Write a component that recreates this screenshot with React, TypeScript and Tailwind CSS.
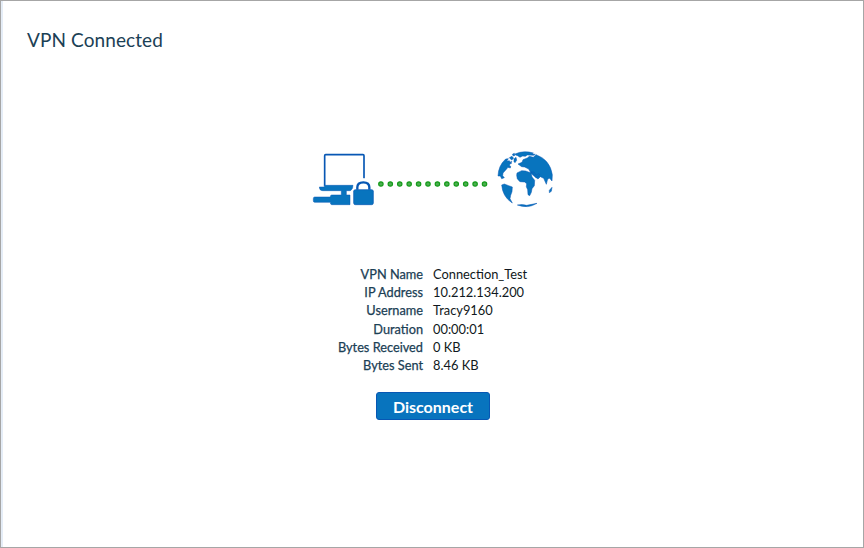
const details: { label: string; value: string }[] = [
  { label: 'VPN Name', value: 'Connection_Test' },
  { label: 'IP Address', value: '10.212.134.200' },
  { label: 'Username', value: 'Tracy9160' },
  { label: 'Duration', value: '00:00:01' },
  { label: 'Bytes Received', value: '0 KB' },
  { label: 'Bytes Sent', value: '8.46 KB' },
];

function ComputerIcon() {
  return (
    <svg className="h-[75px] w-[75px]" viewBox="0 0 225 225" fill="#0874be">
      <path d="M74 137V47q0-3 3-3h112q3 0 3 3v68" fill="none" stroke="#0757b4" strokeWidth="5" />
      <path d="M58 141h15v-5h86q-1 16-10 16h-10v13h11v29H95q-4 0-4-7H44q-4 0-4-5v-6q0-5 4-5h47q0-6 4-6h29v-13H68q-10 0-10-11z" stroke="#0757b4" strokeWidth="1.5" />
      <path d="M160 150l5-1v-8q0-21 25-21t25 21v8l5 1v45h-60z" stroke="white" strokeWidth="8" fill="white" />
      <path d="M172 149v-7q0-15 18-15t18 15v7" fill="none" stroke="#0757b4" strokeWidth="7" />
      <rect x="161" y="149" width="59" height="45" rx="5" stroke="#0757b4" strokeWidth="2" />
    </svg>
  );
}

function GlobeIcon() {
  return (
    <svg className="h-[75px] w-[80px]" viewBox="0 0 240 225" fill="#0874be" stroke="#0757b4" strokeWidth="1.5" strokeLinejoin="round">
      <path d="M39 108Q40 77 62 57l8-1-5 8 8-2 4 7-4 7 4 3-1 5-7-2-6 7-9 10-1 8 5 6-8 3-4-8z" />
      <path d="M50 135l8-3 13 5 11 4-1 14-4 11-2 10 7 13Q53 171 50 135z" />
      <path d="M90 42Q116 30 145 39l-4 3 10 1-5 3-19-1-6 4-8-1-8 4-7-5-6-2z" />
      <path d="M73 53l8-4 5 6-6 5zM82 43l6-3 2 6-5 2zM87 57l6-5 2 9-5 7-3-3zM76 66l4-2-2 8z" />
      <path d="M99 72l12-5 3-8 13-5 6-5 12 3 8-8q42 15 49 60l-1 19-7-8-6 2-4 16-8-18-10-5-7 7-11-8-9-8-8-14-12-6-9-1z" />
      <path d="M96 99l14-7 12 1 8 3 8 2 3 13 8 10-1 16-7 9-2 11-5 10-5-3-1-15-4-9 1-9-6-5-14-1-8-8-2-11z" />
      <path d="M138 96l7 5 8 12 7-4 4-6-5-2-5 5-7-10zM193 151l8-9-2 12-6 4zM97 195q15-3 28 1l31-6q-27 17-59 5z" />
    </svg>
  );
}

export default function App() {
  return (
    <main className="flex h-[548px] w-[864px] flex-col border border-[#a6a6a6] bg-white font-['Lato',sans-serif]">
      <div className="flex min-h-0 flex-1 flex-col border-l-2 border-[#e5edf7]">
        <h1 className="mt-[25px] ml-[24px] h-7 text-[19px] leading-7 tracking-[0.1px] text-[#1b4055]">VPN Connected</h1>
        <div className="mt-[86px] ml-[297px] flex w-[265px]">
          <ComputerIcon />
          <svg className="h-[75px] w-[110px] overflow-visible" viewBox="0 0 110 75">
            {Array.from({ length: 12 }, (_, i) => (
              <circle key={i} cx={5.9 + i * 9.42} cy="44" r="2.2" fill="#4caf50" stroke="#149b1a" strokeWidth="1.2" />
            ))}
          </svg>
          <GlobeIcon />
        </div>
        <dl className="mt-[49.5px] ml-[297px] leading-[18.4px]">
          {details.map((d) => (
            <div key={d.label} className="flex h-[18.4px] gap-[10px]">
              <dt className="w-[123px] text-right text-[12.75px] text-[#1b4055] [-webkit-text-stroke:0.25px_#1b4055]">{d.label}</dt>
              <dd className="text-[12.85px] text-[#101820]">{d.value}</dd>
            </div>
          ))}
        </dl>
        <button className="mt-[17px] ml-[373px] h-[28px] w-[114px] rounded-[3px] border border-[#0757b4] bg-[#0874be] pt-px text-[16px] leading-[26px] font-bold text-white">
          Disconnect
        </button>
      </div>
    </main>
  );
}
